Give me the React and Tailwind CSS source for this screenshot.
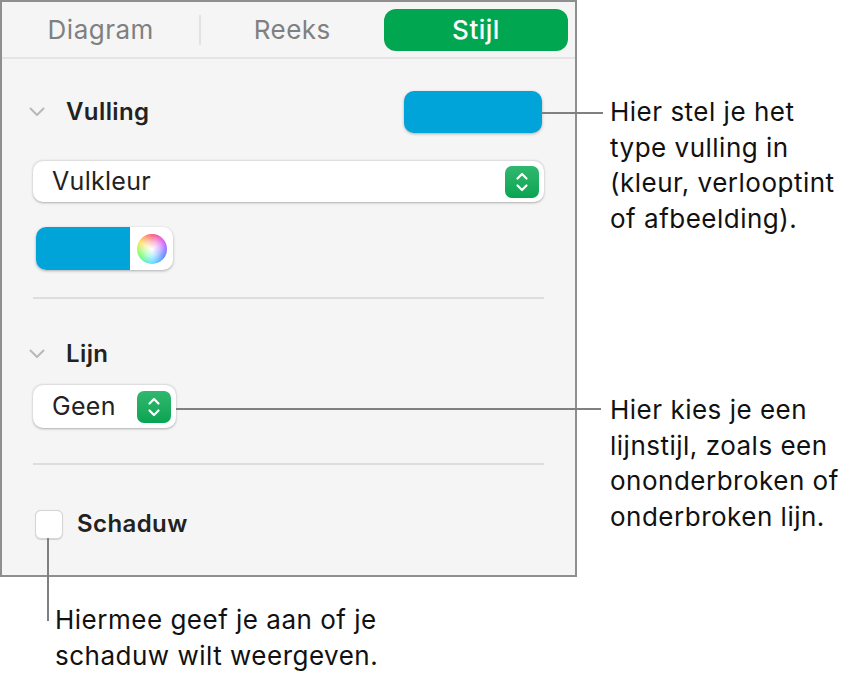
import React from 'react';

const font = { fontFamily: 'Inter, "Noto Sans", sans-serif' };

function Disclosure() {
  return (
    <svg width="16" height="10" viewBox="0 0 16 10" className="shrink-0">
      <path d="M1.5 1.5 L8 8 L14.5 1.5" fill="none" stroke="#b8b8b8" strokeWidth="2" strokeLinecap="round" strokeLinejoin="round" />
    </svg>
  );
}

function Stepper() {
  return (
    <div className="w-[34px] h-[32px] rounded-[7px] bg-gradient-to-b from-[#2fb86f] to-[#06a451] flex items-center justify-center shrink-0">
      <svg width="14" height="22" viewBox="0 0 14 22">
        <path d="M2.5 7.5 L7 3 L11.5 7.5 M2.5 14.5 L7 19 L11.5 14.5" fill="none" stroke="white" strokeWidth="2.2" strokeLinecap="round" strokeLinejoin="round" />
      </svg>
    </div>
  );
}

function PopUp({ label, className }) {
  return (
    <div className={`bg-white rounded-[10px] shadow-[0_0.5px_2.5px_rgba(0,0,0,0.3)] flex items-center justify-between pl-[19px] pr-[5px] ${className}`}>
      <span className="text-[25px] tracking-[0.3px] text-[#222] leading-none">{label}</span>
      <Stepper />
    </div>
  );
}

export default function App() {
  return (
    <div className="relative w-[854px] h-[681px] bg-white overflow-hidden" style={font}>
      <div className="flex">
        {/* inspector panel */}
        <div className="w-[577px] h-[577px] border-2 border-[#8f8f8f] bg-[#f5f5f5] flex flex-col">
          <div className="h-[57px] border-b-2 border-[#e4e4e4] flex items-center px-[7px]">
            <div className="flex-1 h-[42px] flex items-center justify-center text-[26px] tracking-[0.5px] text-[#808080] pr-[6px]">Diagram</div>
            <div className="w-[2px] h-[30px] bg-[#e2e2e2]"></div>
            <div className="flex-1 h-[42px] flex items-center justify-center text-[26px] tracking-[0.5px] text-[#808080]">Reeks</div>
            <div className="w-[184px] h-[42px] rounded-[12px] bg-[#00a650] flex items-center justify-center text-[26px] tracking-[0.5px] text-white font-medium">Stijl</div>
          </div>

          <div className="px-[31px] flex flex-col">
            <div className="mt-[32px] h-[42px] flex items-center">
              <div className="-ml-[4px] w-[37px]"><Disclosure /></div>
              <span className="text-[24px] tracking-[0.4px] font-semibold text-[#222]">Vulling</span>
              <div className="ml-auto mr-[2px] w-[138px] h-[42px] rounded-[10px] bg-[#00a4d8] shadow-[0_1px_3px_rgba(0,0,0,0.3)]"></div>
            </div>

            <PopUp label="Vulkleur" className="mt-[28px] h-[41px]" />

            <div className="mt-[25px] ml-[3px] w-[137px] h-[43px] rounded-[10px] bg-white shadow-[0_1px_3px_rgba(0,0,0,0.3)] flex overflow-hidden">
              <div className="w-[94px] bg-[#00a4d8]"></div>
              <div className="flex-1 flex items-center justify-center">
                <div className="relative w-[30px] h-[30px] rounded-full bg-[conic-gradient(#ff4d6d,#d24cff,#4d7dff,#4ddfff,#66ff66,#ffe14d,#ff4d6d)]">
                  <div className="absolute inset-0 rounded-full bg-[radial-gradient(circle,white_0%,rgba(255,255,255,0.6)_35%,transparent_75%)]"></div>
                </div>
              </div>
            </div>

            <div className="mt-[27px] h-[2px] bg-[#dddddd]"></div>

            <div className="mt-[40px] h-[30px] flex items-center">
              <div className="-ml-[4px] w-[37px]"><Disclosure /></div>
              <span className="text-[24px] tracking-[0.4px] font-semibold text-[#222]">Lijn</span>
            </div>

            <PopUp label="Geen" className="mt-[16px] h-[43px] w-[143px]" />

            <div className="mt-[35px] h-[2px] bg-[#dddddd]"></div>

            <div className="mt-[41px] flex items-center">
              <div className="ml-[2px] w-[28px] h-[29px] rounded-[6px] bg-white border border-[#d6d6d6] shadow-[0_0.5px_1px_rgba(0,0,0,0.15)]"></div>
              <span className="ml-[14px] text-[24px] tracking-[0.4px] font-semibold text-[#222]">Schaduw</span>
            </div>
          </div>
        </div>

        {/* right annotations */}
        <div className="pl-[33px] flex flex-col text-[26px] tracking-[0.5px] leading-[35.5px] text-[#111]">
          <p className="mt-[94px]">Hier stel je het<br />type vulling in<br />(kleur, verlooptint<br />of afbeelding).</p>
          <p className="mt-[156px]">Hier kies je een<br />lijnstijl, zoals een<br />ononderbroken of<br />onderbroken lijn.</p>
        </div>
      </div>

      <p className="mt-[25px] pl-[55px] text-[26px] tracking-[0.5px] leading-[35.5px] text-[#111]">Hiermee geef je aan of je<br />schaduw wilt weergeven.</p>

      {/* callout lines */}
      <div className="absolute left-[541px] top-[112px] w-[62px] h-[2px] bg-[#808080]"></div>
      <div className="absolute left-[176px] top-[408px] w-[425px] h-[2px] bg-[#808080]"></div>
      <div className="absolute left-[47px] top-[538px] w-[2px] h-[83px] bg-[#808080]"></div>
    </div>
  );
}
